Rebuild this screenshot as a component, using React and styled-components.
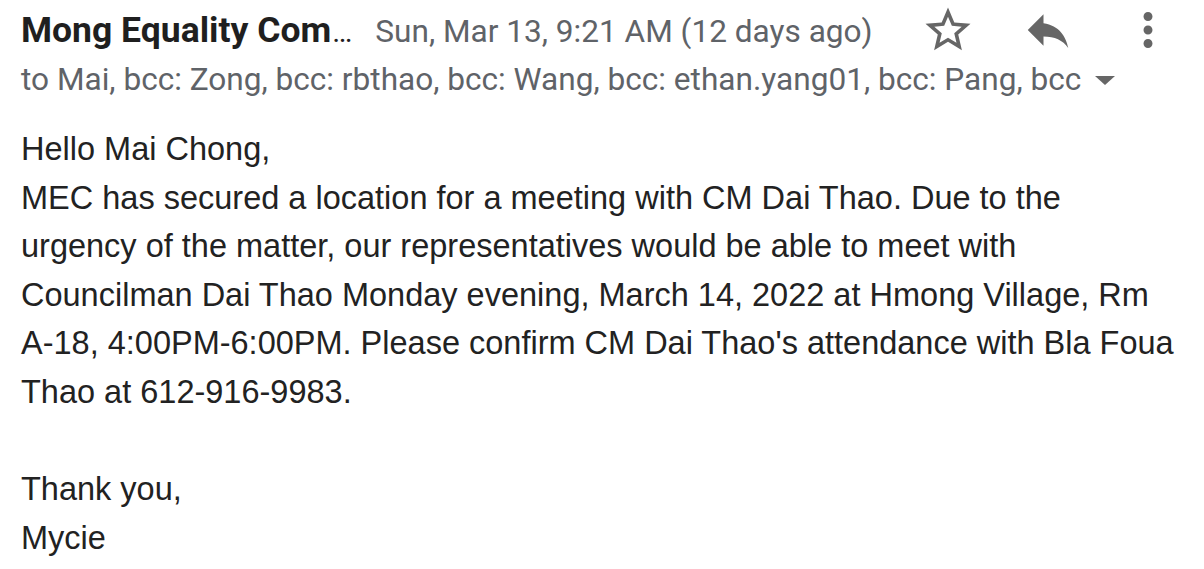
import React from 'react';
import styled, { createGlobalStyle } from 'styled-components';

const Global = createGlobalStyle`
  html, body {
    margin: 0;
    padding: 0;
    background: #fff;
  }
`;

const Page = styled.div`
  width: 1204px;
  height: 569px;
  box-sizing: border-box;
  padding: 0 29px 0 21px;
  overflow: hidden;
`;

const TopRow = styled.div`
  display: flex;
  align-items: center;
  height: 60px;
`;

const Sender = styled.div`
  display: flex;
  align-items: baseline;
  flex: 1;
  min-width: 0;
  font-family: Roboto, "Liberation Sans", sans-serif;
`;

const Name = styled.span`
  font-size: 35.5px;
  font-weight: 700;
  color: #1f1f1f;
  white-space: nowrap;
`;

const Dots = styled.span`
  font-weight: 400;
  font-size: 30px;
  margin-left: 1px;
`;

const Date = styled.span`
  margin-left: 23px;
  font-size: 31.6px;
  color: #5f6368;
  white-space: nowrap;
`;

const Actions = styled.div`
  display: flex;
  gap: 46px;
`;

const IconBox = styled.span`
  display: flex;
  width: 54px;
  height: 54px;
  svg {
    width: 54px;
    height: 54px;
    fill: #666;
  }
`;

const ToRow = styled.div`
  display: flex;
  align-items: center;
  height: 38px;
  font-family: Roboto, "Liberation Sans", sans-serif;
  font-size: 31.6px;
  color: #5f6368;
  white-space: nowrap;
`;

const Caret = styled.span`
  margin-left: 14px;
  width: 0;
  height: 0;
  border-left: 10px solid transparent;
  border-right: 10px solid transparent;
  border-top: 9px solid #666;
  margin-top: 2px;
`;

const Body = styled.div`
  margin-top: 27px;
  font-family: "Liberation Sans", Arial, sans-serif;
  font-size: 32.5px;
  line-height: 48.6px;
  color: #222;
  white-space: nowrap;
`;

const Line = styled.div`
  min-height: 48.6px;
`;

const StarIcon = () => (
  <svg viewBox="0 0 24 24">
    <path d="M22 9.24l-7.19-.62L12 2 9.19 8.63 2 9.24l5.46 4.73L5.82 21 12 17.27 18.18 21l-1.63-7.03L22 9.24zM12 15.4l-3.76 2.27 1-4.28-3.32-2.88 4.38-.38L12 6.1l1.71 4.04 4.38.38-3.32 2.88 1 4.28L12 15.4z" />
  </svg>
);

const ReplyIcon = () => (
  <svg viewBox="0 0 24 24">
    <path d="M10 9V5l-7 7 7 7v-4.1c5 0 8.5 1.6 11 5.1-1-5-4-10-11-11z" />
  </svg>
);

const MoreIcon = () => (
  <svg viewBox="0 0 24 24">
    <path d="M12 8c1.1 0 2-.9 2-2s-.9-2-2-2-2 .9-2 2 .9 2 2 2zm0 2c-1.1 0-2 .9-2 2s.9 2 2 2 2-.9 2-2-.9-2-2-2zm0 6c-1.1 0-2 .9-2 2s.9 2 2 2 2-.9 2-2-.9-2-2-2z" />
  </svg>
);

const lines = [
  'Hello Mai Chong,',
  'MEC has secured a location for a meeting with CM Dai Thao. Due to the',
  'urgency of the matter, our representatives would be able to meet with',
  'Councilman Dai Thao Monday evening, March 14, 2022 at Hmong Village, Rm',
  "A-18, 4:00PM-6:00PM. Please confirm CM Dai Thao's attendance with Bla Foua",
  'Thao at 612-916-9983.',
  '',
  'Thank you,',
  'Mycie',
];

export default function App() {
  return (
    <Page>
      <Global />
      <TopRow>
        <Sender>
          <Name>
            Mong Equality Com<Dots>…</Dots>
          </Name>
          <Date>Sun, Mar 13, 9:21 AM (12 days ago)</Date>
        </Sender>
        <Actions>
          <IconBox><StarIcon /></IconBox>
          <IconBox><ReplyIcon /></IconBox>
          <IconBox><MoreIcon /></IconBox>
        </Actions>
      </TopRow>
      <ToRow>
        to Mai, bcc: Zong, bcc: rbthao, bcc: Wang, bcc: ethan.yang01, bcc: Pang, bcc
        <Caret />
      </ToRow>
      <Body>
        {lines.map((l, i) => (
          <Line key={i}>{l}</Line>
        ))}
      </Body>
    </Page>
  );
}
